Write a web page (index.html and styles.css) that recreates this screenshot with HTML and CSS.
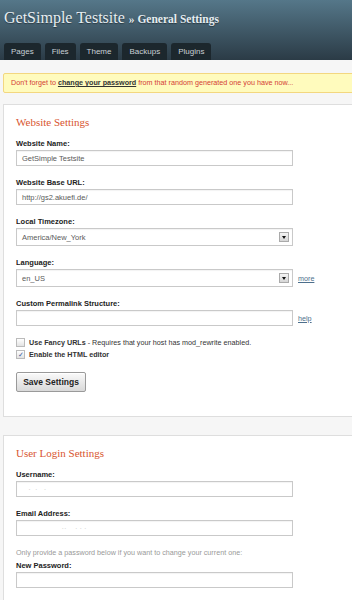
FILE: index.html
```html
<!DOCTYPE html>
<html lang="en">
<head>
  <meta charset="UTF-8">
  <meta name="viewport" content="width=device-width, initial-scale=1.0">
  <title>General Settings - GetSimple</title>
  <link rel="stylesheet" href="styles.css">
</head>
<body>
  <div id="header">
    <h1>GetSimple Testsite <span>&raquo; General Settings</span></h1>
    <ul class="nav">
      <li>Pages</li>
      <li>Files</li>
      <li>Theme</li>
      <li>Backups</li>
      <li>Plugins</li>
    </ul>
  </div>

  <div class="wrapper">
    <div class="notify">Don't forget to <a href="#">change your password</a> from that random generated one you have now...</div>

    <div class="main">
      <h3>Website Settings</h3>
      <p class="field">
        <label>Website Name:</label>
        <span class="text">GetSimple Testsite</span>
      </p>
      <p class="field">
        <label>Website Base URL:</label>
        <span class="text">http://gs2.akuefi.de/</span>
      </p>
      <p class="field">
        <label>Local Timezone:</label>
        <span class="select">America/New_York<i></i></span>
      </p>
      <p class="field">
        <label>Language:</label>
        <span class="row"><span class="select">en_US<i></i></span><a href="#">more</a></span>
      </p>
      <p class="field">
        <label>Custom Permalink Structure:</label>
        <span class="row"><span class="text"></span><a href="#">help</a></span>
      </p>
      <div class="checks">
        <p class="check"><i class="box"></i><b>Use Fancy URLs</b>&nbsp;- Requires that your host has mod_rewrite enabled.</p>
        <p class="check"><i class="box on"></i><b>Enable the HTML editor</b></p>
      </div>
      <button class="submit">Save Settings</button>
    </div>

    <div class="main">
      <h3>User Login Settings</h3>
      <p class="field">
        <label>Username:</label>
        <span class="text blur">&nbsp;&nbsp;&nbsp;&middot;&nbsp;&nbsp;&middot;&nbsp;&nbsp;&nbsp;&middot;</span>
      </p>
      <p class="field">
        <label>Email Address:</label>
        <span class="text blur">&nbsp;&nbsp;&nbsp;&nbsp;&nbsp;&nbsp;&nbsp;&nbsp;&nbsp;&nbsp;&nbsp;&nbsp;&nbsp;&nbsp;&nbsp;&nbsp;&nbsp;&nbsp;&nbsp;&middot;&middot;&nbsp;&nbsp;&nbsp;&nbsp;&middot;&nbsp;&middot;&nbsp;&middot;</span>
      </p>
      <p class="hint">Only provide a password below if you want to change your current one:</p>
      <p class="field">
        <label>New Password:</label>
        <span class="text"></span>
      </p>
    </div>
  </div>
</body>
</html>
```

FILE: styles.css
```css
body {
  margin: 0;
  background: #f6f6f6;
  font-family: "Liberation Sans", Arial, sans-serif;
  font-size: 8px;
  color: #333;
  overflow-x: hidden;
}
#header {
  height: 60px;
  background: linear-gradient(#557789, #2b3b46);
  display: flex;
  flex-direction: column;
  justify-content: space-between;
}
#header h1 {
  margin: 0;
  padding: 9px 0 0 4px;
  font-family: "Liberation Serif", "Times New Roman", serif;
  font-weight: normal;
  font-size: 16px;
  color: #e6edf1;
  text-shadow: 0 1px 1px rgba(0,0,0,.4);
}
#header h1 span {
  font-weight: bold;
  font-size: 11.5px;
}
.nav {
  list-style: none;
  margin: 0;
  padding: 0 0 0 4px;
  display: flex;
  gap: 4px;
}
.nav li {
  height: 17px;
  line-height: 17px;
  padding: 0 7px;
  background: #1c272d;
  border-radius: 3px 3px 0 0;
  color: #c9d1d6;
  font-size: 8px;
}
.wrapper {
  width: 620px;
  padding: 13px 0 0 3px;
}
.notify {
  height: 18px;
  line-height: 18px;
  padding: 0 7px;
  background: #fffbbd;
  border: 1px solid #f3d780;
  border-radius: 2px;
  color: #d43b35;
  font-size: 7.2px;
}
.notify a {
  color: #333;
  font-weight: bold;
}
.main {
  margin-top: 11px;
  background: #fff;
  border: 1px solid #dedede;
  padding: 11px 12px 24px;
  margin-bottom: 18px;
}
.main h3 {
  margin: 0 0 11px;
  font-family: "Liberation Serif", Georgia, serif;
  font-weight: normal;
  font-size: 11px;
  color: #d8552f;
}
.field {
  margin: 0 0 12px;
}
.field label {
  display: block;
  font-weight: bold;
  font-size: 7.5px;
  color: #222;
  margin-bottom: 2px;
}
.text,
.select {
  box-sizing: border-box;
  width: 277px;
  height: 16px;
  padding: 0 5px;
  border: 1px solid #c9c9c9;
  box-shadow: 0 1px 1px rgba(0,0,0,.05) inset;
  display: flex;
  align-items: center;
  font-size: 7.5px;
  color: #5a5a5a;
  background: #fff;
}
.select {
  height: 18px;
  justify-content: space-between;
  padding-right: 3px;
}
.select i {
  width: 10px;
  height: 10px;
  box-sizing: border-box;
  border: 1px solid #aaa;
  background: linear-gradient(#f4f4f4, #d6d6d6);
  display: flex;
  align-items: center;
  justify-content: center;
}
.select i:after {
  content: '';
  border-top: 3px solid #111;
  border-left: 2.5px solid transparent;
  border-right: 2.5px solid transparent;
}
.row {
  display: flex;
  align-items: center;
  gap: 5px;
}
.row a {
  color: #4d6f8c;
  font-size: 7.2px;
}
.blur {
  color: #ccc;
}
.checks {
  margin-top: 12px;
}
.check {
  margin: 0 0 3px;
  display: flex;
  align-items: center;
  font-size: 7.2px;
  color: #333;
}
.check b {
  margin-left: 4px;
}
.box {
  width: 7px;
  height: 7px;
  border: 1px solid #bbb;
  background: linear-gradient(#fff, #e3e3e3);
  font-style: normal;
  display: flex;
  align-items: center;
  justify-content: center;
  font-size: 7px;
  line-height: 1;
  color: #3a5c9e;
}
.box.on:after {
  content: '\2713';
}
.submit {
  margin-top: 10px;
  width: 70px;
  height: 20px;
  border: 1px solid #9a9a9a;
  border-radius: 2px;
  background: linear-gradient(#fafafa, #d9d9d9);
  box-shadow: 0 1px 0 #fff inset;
  font-family: "Liberation Sans", Arial, sans-serif;
  font-weight: bold;
  font-size: 8.5px;
  color: #222;
  padding: 0;
}
.hint {
  margin: 0 0 4px;
  color: #999;
  font-size: 7.2px;
}
```
